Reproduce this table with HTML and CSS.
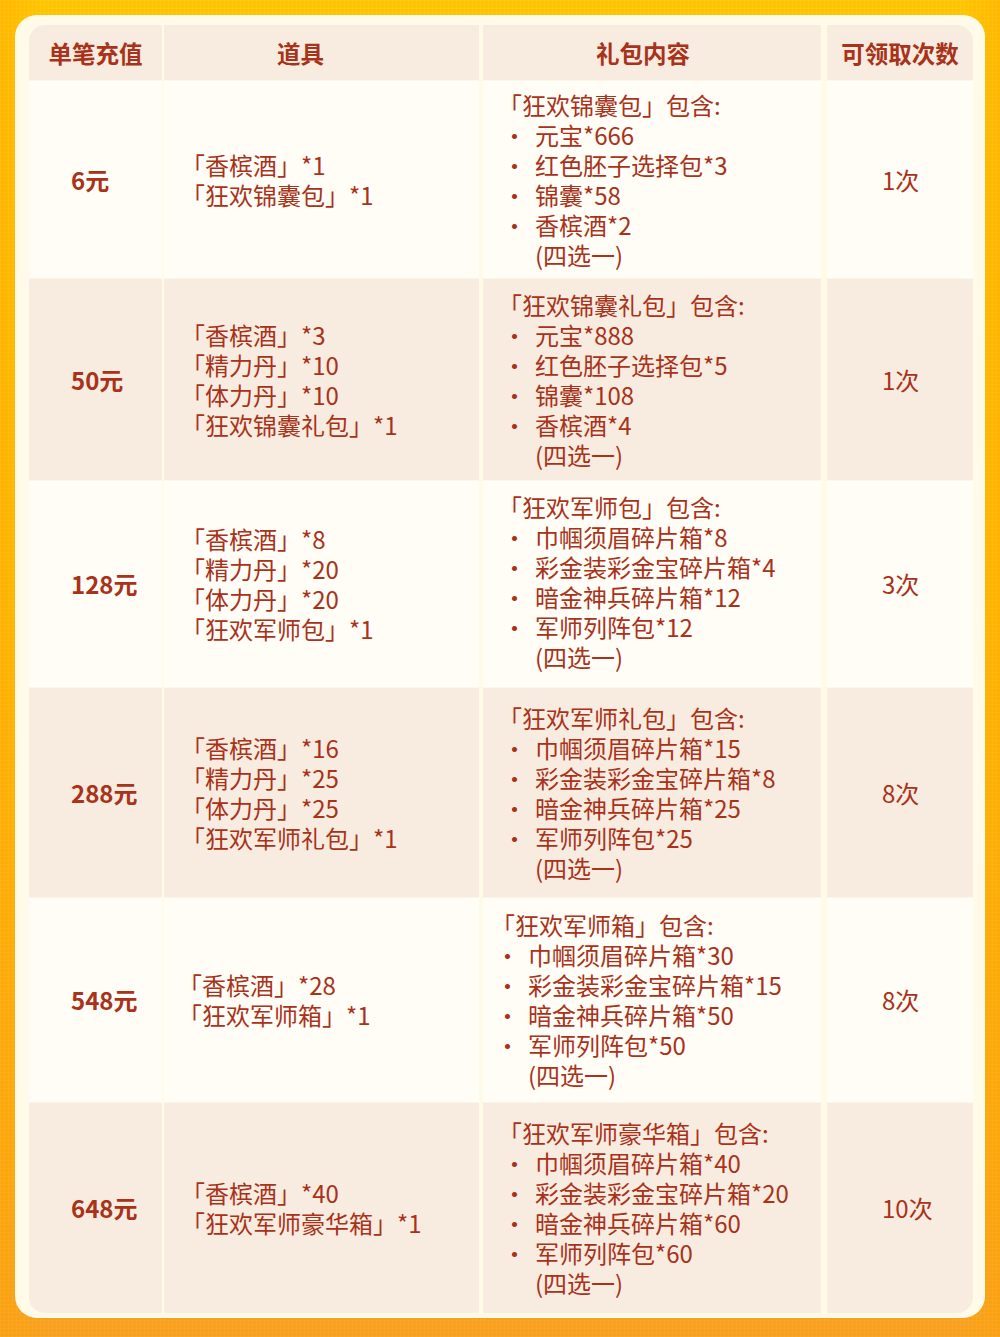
FILE: index.html
```html
<!DOCTYPE html>
<html lang="zh-CN">
<head>
<meta charset="utf-8">
<title>礼包</title>
<link rel="stylesheet" href="styles.css">
</head>
<body>
<div class="page">
  <div class="card">
    <div class="table">
      <div class="cell c1 head">单笔充值</div>
      <div class="cell c2 head h2">道具</div>
      <div class="cell c3 head h3">礼包内容</div>
      <div class="cell c4 head">可领取次数</div>

      <div class="cell c1 light price">6元</div>
      <div class="cell c2 light"><div>「香槟酒」*1</div><div>「狂欢锦囊包」*1</div></div>
      <div class="cell c3 light"><div class="list">
        <div>「狂欢锦囊包」包含:</div>
        <div class="item"><span class="dot">·</span>元宝*666</div>
        <div class="item"><span class="dot">·</span>红色胚子选择包*3</div>
        <div class="item"><span class="dot">·</span>锦囊*58</div>
        <div class="item"><span class="dot">·</span>香槟酒*2</div>
        <div class="note">(四选一)</div>
      </div></div>
      <div class="cell c4 light">1次</div>

      <div class="cell c1 alt price">50元</div>
      <div class="cell c2 alt"><div>「香槟酒」*3</div><div>「精力丹」*10</div><div>「体力丹」*10</div><div>「狂欢锦囊礼包」*1</div></div>
      <div class="cell c3 alt"><div class="list">
        <div>「狂欢锦囊礼包」包含:</div>
        <div class="item"><span class="dot">·</span>元宝*888</div>
        <div class="item"><span class="dot">·</span>红色胚子选择包*5</div>
        <div class="item"><span class="dot">·</span>锦囊*108</div>
        <div class="item"><span class="dot">·</span>香槟酒*4</div>
        <div class="note">(四选一)</div>
      </div></div>
      <div class="cell c4 alt">1次</div>

      <div class="cell c1 light price">128元</div>
      <div class="cell c2 light"><div>「香槟酒」*8</div><div>「精力丹」*20</div><div>「体力丹」*20</div><div>「狂欢军师包」*1</div></div>
      <div class="cell c3 light raise"><div class="list">
        <div>「狂欢军师包」包含:</div>
        <div class="item"><span class="dot">·</span>巾帼须眉碎片箱*8</div>
        <div class="item"><span class="dot">·</span>彩金装彩金宝碎片箱*4</div>
        <div class="item"><span class="dot">·</span>暗金神兵碎片箱*12</div>
        <div class="item"><span class="dot">·</span>军师列阵包*12</div>
        <div class="note">(四选一)</div>
      </div></div>
      <div class="cell c4 light">3次</div>

      <div class="cell c1 alt price">288元</div>
      <div class="cell c2 alt"><div>「香槟酒」*16</div><div>「精力丹」*25</div><div>「体力丹」*25</div><div>「狂欢军师礼包」*1</div></div>
      <div class="cell c3 alt"><div class="list">
        <div>「狂欢军师礼包」包含:</div>
        <div class="item"><span class="dot">·</span>巾帼须眉碎片箱*15</div>
        <div class="item"><span class="dot">·</span>彩金装彩金宝碎片箱*8</div>
        <div class="item"><span class="dot">·</span>暗金神兵碎片箱*25</div>
        <div class="item"><span class="dot">·</span>军师列阵包*25</div>
        <div class="note">(四选一)</div>
      </div></div>
      <div class="cell c4 alt">8次</div>

      <div class="cell c1 light price">548元</div>
      <div class="cell c2 light shift2"><div>「香槟酒」*28</div><div>「狂欢军师箱」*1</div></div>
      <div class="cell c3 light shift3"><div class="list">
        <div>「狂欢军师箱」包含:</div>
        <div class="item"><span class="dot">·</span>巾帼须眉碎片箱*30</div>
        <div class="item"><span class="dot">·</span>彩金装彩金宝碎片箱*15</div>
        <div class="item"><span class="dot">·</span>暗金神兵碎片箱*50</div>
        <div class="item"><span class="dot">·</span>军师列阵包*50</div>
        <div class="note">(四选一)</div>
      </div></div>
      <div class="cell c4 light">8次</div>

      <div class="cell c1 alt price">648元</div>
      <div class="cell c2 alt"><div>「香槟酒」*40</div><div>「狂欢军师豪华箱」*1</div></div>
      <div class="cell c3 alt"><div class="list">
        <div>「狂欢军师豪华箱」包含:</div>
        <div class="item"><span class="dot">·</span>巾帼须眉碎片箱*40</div>
        <div class="item"><span class="dot">·</span>彩金装彩金宝碎片箱*20</div>
        <div class="item"><span class="dot">·</span>暗金神兵碎片箱*60</div>
        <div class="item"><span class="dot">·</span>军师列阵包*60</div>
        <div class="note">(四选一)</div>
      </div></div>
      <div class="cell c4 alt">10次</div>
    </div>
  </div>
</div>
</body>
</html>
```
FILE: styles.css
```css
html, body {
  margin: 0;
  padding: 0;
}
body {
  width: 1000px;
  height: 1337px;
  overflow: hidden;
  font-family: "Noto Sans CJK SC", "Noto Sans", sans-serif;
  color: #a8321a;
}
.page {
  width: 1000px;
  height: 1337px;
  box-sizing: border-box;
  padding: 15px 15px 0 15px;
  background:
    repeating-linear-gradient(90deg, rgba(255,255,255,0.05) 0 1px, transparent 1px 4px),
    repeating-linear-gradient(0deg, rgba(255,255,255,0.05) 0 1px, transparent 1px 4px),
    linear-gradient(90deg, rgba(255,160,0,0.35) 0%, rgba(255,160,0,0) 4%, rgba(255,160,0,0) 96%, rgba(255,160,0,0.35) 100%),
    linear-gradient(180deg, #ffc400 0%, #ffbb00 45%, #fbaa10 85%, #f8a01c 100%);
}
.card {
  width: 970px;
  box-sizing: border-box;
  padding: 10px 12px 5px 14px;
  background: #fffbe8;
  border-radius: 22px;
}
.table {
  display: grid;
  grid-template-columns: 133px 317px 342px 152px;
  grid-template-rows: 55px 198px 202px 207px 210px 205px 211px;
  border-radius: 16px;
  overflow: hidden;
  font-size: 24px;
  line-height: 30px;
}
.cell {
  display: flex;
  flex-direction: column;
  justify-content: center;
  box-sizing: border-box;
  border-top: 1px solid #fdf6ea;
}
.light { background: #fffdf6; }
.alt { background: #f8ece0; }
.c1 { padding-left: 42px; }
.c2 { border-left: 2px solid #fffbe6; padding-left: 17px; }
.c3 { border-left: 4px solid #fffbe6; padding-left: 15px; }
.c4 { border-left: 6px solid #fffbe6; align-items: flex-start; padding-left: 55px; }
.head {
  background: #f8ece0;
  font-weight: 700;
  border-top: none;
  align-items: center;
  font-size: 23.5px;
}
.c1.head, .c4.head { padding-left: 0; }
.h2 { padding-left: 0; padding-right: 42px; }
.h3 { padding-left: 0; padding-right: 18px; }
.shift2 { padding-left: 14px; }
.shift3 { padding-left: 8px; }
.raise { padding-bottom: 5px; }
.price { font-weight: 700; }
.item { display: flex; }
.dot {
  display: inline-block;
  width: 37px;
  box-sizing: border-box;
  padding-right: 4px;
  text-align: center;
}
.note { padding-left: 37px; }
```
